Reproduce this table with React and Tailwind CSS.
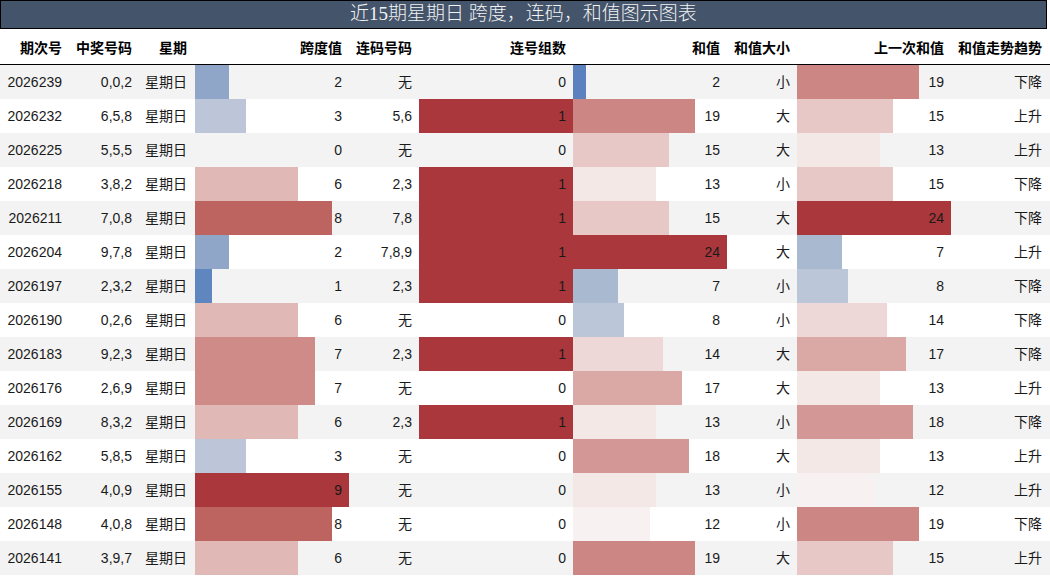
import React from "react";

const rows = [
  ["2026239", "0,0,2", 2, "无", 0, 2, "小", 19, "下降"],
  ["2026232", "6,5,8", 3, "5,6", 1, 19, "大", 15, "上升"],
  ["2026225", "5,5,5", 0, "无", 0, 15, "大", 13, "上升"],
  ["2026218", "3,8,2", 6, "2,3", 1, 13, "小", 15, "下降"],
  ["2026211", "7,0,8", 8, "7,8", 1, 15, "大", 24, "下降"],
  ["2026204", "9,7,8", 2, "7,8,9", 1, 24, "大", 7, "上升"],
  ["2026197", "2,3,2", 1, "2,3", 1, 7, "小", 8, "下降"],
  ["2026190", "0,2,6", 6, "无", 0, 8, "小", 14, "下降"],
  ["2026183", "9,2,3", 7, "2,3", 1, 14, "大", 17, "下降"],
  ["2026176", "2,6,9", 7, "无", 0, 17, "大", 13, "上升"],
  ["2026169", "8,3,2", 6, "2,3", 1, 13, "小", 18, "下降"],
  ["2026162", "5,8,5", 3, "无", 0, 18, "大", 13, "上升"],
  ["2026155", "4,0,9", 9, "无", 0, 13, "小", 12, "上升"],
  ["2026148", "4,0,8", 8, "无", 0, 12, "小", 19, "下降"],
  ["2026141", "3,9,7", 6, "无", 0, 19, "大", 15, "上升"],
];

const spanColors = {
  1: "#5f86bf",
  2: "#90a6c9",
  3: "#bcc6d8",
  6: "#e0b8b6",
  7: "#cf8b88",
  8: "#bd6461",
  9: "#a9373c",
};

const sumColors = {
  2: "#5b82be",
  7: "#a9b9cf",
  8: "#bbc6d8",
  12: "#f8f1f1",
  13: "#f4e8e7",
  14: "#eed8d7",
  15: "#e7c8c6",
  17: "#daa8a5",
  18: "#d39895",
  19: "#cc8784",
  24: "#a9373c",
};

const consecColors = { 1: "#a9373c" };

function BarCell({ value, max, colors, width, pr }) {
  const w = Math.round((value / max) * 154);
  return (
    <div className={`relative h-full flex items-center justify-end ${width} ${pr}`}>
      {value > 0 && (
        <div
          className="absolute left-0 top-0 bottom-0"
          style={{ width: w + "px", backgroundColor: colors[value] }}
        />
      )}
      <span className="relative">{value}</span>
    </div>
  );
}

function Cell({ children, width, pr = "pr-2" }) {
  return (
    <div className={`h-full flex items-center justify-end ${width} ${pr}`}>
      {children}
    </div>
  );
}

export default function App() {
  const font = {
    fontFamily: '"Liberation Sans", "Noto Sans CJK SC", sans-serif',
  };
  return (
    <div className="w-[1050px] h-[576px] bg-white overflow-hidden text-[14px] text-[#1a1a1a]" style={font}>
      <div
        className="w-[1047px] h-[29px] bg-[#44546a] border border-black flex items-center justify-center text-[19px] text-[#f2f2f2] font-light"
        style={{ fontFamily: '"Liberation Serif", "Noto Sans CJK SC", serif' }}
      >
        近15期星期日 跨度，连码，和值图示图表
      </div>
      <div className="flex h-[36px] border-b border-black font-bold text-black pt-[3px]">
        <Cell width="w-[70px]">期次号</Cell>
        <Cell width="w-[70px]">中奖号码</Cell>
        <Cell width="w-[55px]">星期</Cell>
        <Cell width="w-[155px]">跨度值</Cell>
        <Cell width="w-[69px]" pr="pr-[7px]">连码号码</Cell>
        <Cell width="w-[154px]" pr="pr-[7px]">连号组数</Cell>
        <Cell width="w-[155px]">和值</Cell>
        <Cell width="w-[69px]" pr="pr-[7px]">和值大小</Cell>
        <Cell width="w-[155px]">上一次和值</Cell>
        <Cell width="w-[98px]">和值走势趋势</Cell>
      </div>
      {rows.map((r, i) => (
        <div
          key={r[0]}
          className={`flex h-[34px] ${i % 2 === 0 ? "bg-[#f3f3f3]" : "bg-white"}`}
        >
          <Cell width="w-[70px]">{r[0]}</Cell>
          <Cell width="w-[70px]">{r[1]}</Cell>
          <Cell width="w-[55px]">星期日</Cell>
          <BarCell value={r[2]} max={9} colors={spanColors} width="w-[155px]" pr="pr-2" />
          <Cell width="w-[69px]" pr="pr-[7px]">{r[3]}</Cell>
          <BarCell value={r[4]} max={1} colors={consecColors} width="w-[154px]" pr="pr-[7px]" />
          <BarCell value={r[5]} max={24} colors={sumColors} width="w-[155px]" pr="pr-2" />
          <Cell width="w-[69px]" pr="pr-[7px]">{r[6]}</Cell>
          <BarCell value={r[7]} max={24} colors={sumColors} width="w-[155px]" pr="pr-2" />
          <Cell width="w-[98px]">{r[8]}</Cell>
        </div>
      ))}
    </div>
  );
}
